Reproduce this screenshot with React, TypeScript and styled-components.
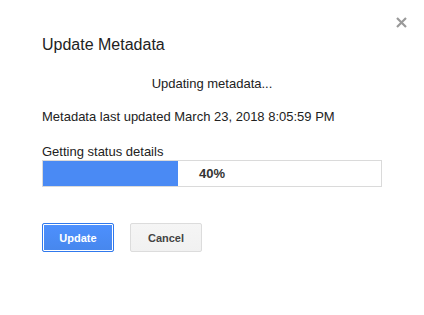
import React from "react";
import styled, { createGlobalStyle } from "styled-components";

const Global = createGlobalStyle`
  html, body { margin: 0; padding: 0; background: #fff; }
  body { font-family: "Liberation Sans", Arial, sans-serif; color: #222; }
`;

const Dialog = styled.div`
  position: relative;
  width: 424px;
  height: 315px;
  box-sizing: border-box;
  padding: 35px 42px 0 42px;
  display: flex;
  flex-direction: column;
  background: #fff;
`;

const Close = styled.button`
  position: absolute;
  top: 17px;
  left: 396px;
  width: 11px;
  height: 11px;
  padding: 0;
  border: 0;
  background: transparent;
  display: flex;
  cursor: pointer;
`;

const Title = styled.div`
  font-size: 16px;
  line-height: 20px;
  color: #222;
`;

const Status = styled.div`
  margin-top: 21px;
  font-size: 13px;
  line-height: 16px;
  text-align: center;
  color: #222;
`;

const Line = styled.div<{ $gap: number }>`
  margin-top: ${(p) => p.$gap}px;
  font-size: 13px;
  line-height: 16px;
  color: #222;
`;

const Bar = styled.div`
  position: relative;
  height: 25px;
  border: 1px solid #dadada;
  display: flex;
  align-items: stretch;
`;

const Fill = styled.div`
  background: #4a8af4;
`;

const Percent = styled.span`
  position: absolute;
  inset: 0;
  display: flex;
  align-items: center;
  justify-content: center;
  font-size: 13px;
  font-weight: bold;
  color: #333;
`;

const Buttons = styled.div`
  margin-top: 36px;
  display: flex;
  gap: 16px;
`;

const Button = styled.button<{ $primary?: boolean }>`
  min-width: 72px;
  height: 29px;
  box-sizing: border-box;
  padding: 0 8px;
  border-radius: 2px;
  font-family: "Liberation Sans", Arial, sans-serif;
  font-size: 11px;
  font-weight: bold;
  cursor: pointer;
  ${(p) =>
    p.$primary
      ? `
    color: #fff;
    background: linear-gradient(#4d90fe, #4787ed);
    border: 1px solid #3079ed;
    box-shadow: inset 0 0 0 1px #fff;
  `
      : `
    color: #444;
    background: linear-gradient(#f5f5f5, #f1f1f1);
    border: 1px solid #dcdcdc;
  `}
`;

export default function App() {
  const progress = 40;
  return (
    <>
      <Global />
      <Dialog>
        <Close aria-label="Close">
          <svg width="11" height="11" viewBox="0 0 11 11">
            <path d="M1 1 L10 10 M10 1 L1 10" stroke="#9a9a9a" strokeWidth="2.2" />
          </svg>
        </Close>
        <Title>Update Metadata</Title>
        <Status>Updating metadata...</Status>
        <Line $gap={17}>Metadata last updated March 23, 2018 8:05:59 PM</Line>
        <Line $gap={19}>Getting status details</Line>
        <Bar>
          <Fill style={{ width: `${progress}%` }} />
          <Percent>{progress}%</Percent>
        </Bar>
        <Buttons>
          <Button $primary>Update</Button>
          <Button>Cancel</Button>
        </Buttons>
      </Dialog>
    </>
  );
}
